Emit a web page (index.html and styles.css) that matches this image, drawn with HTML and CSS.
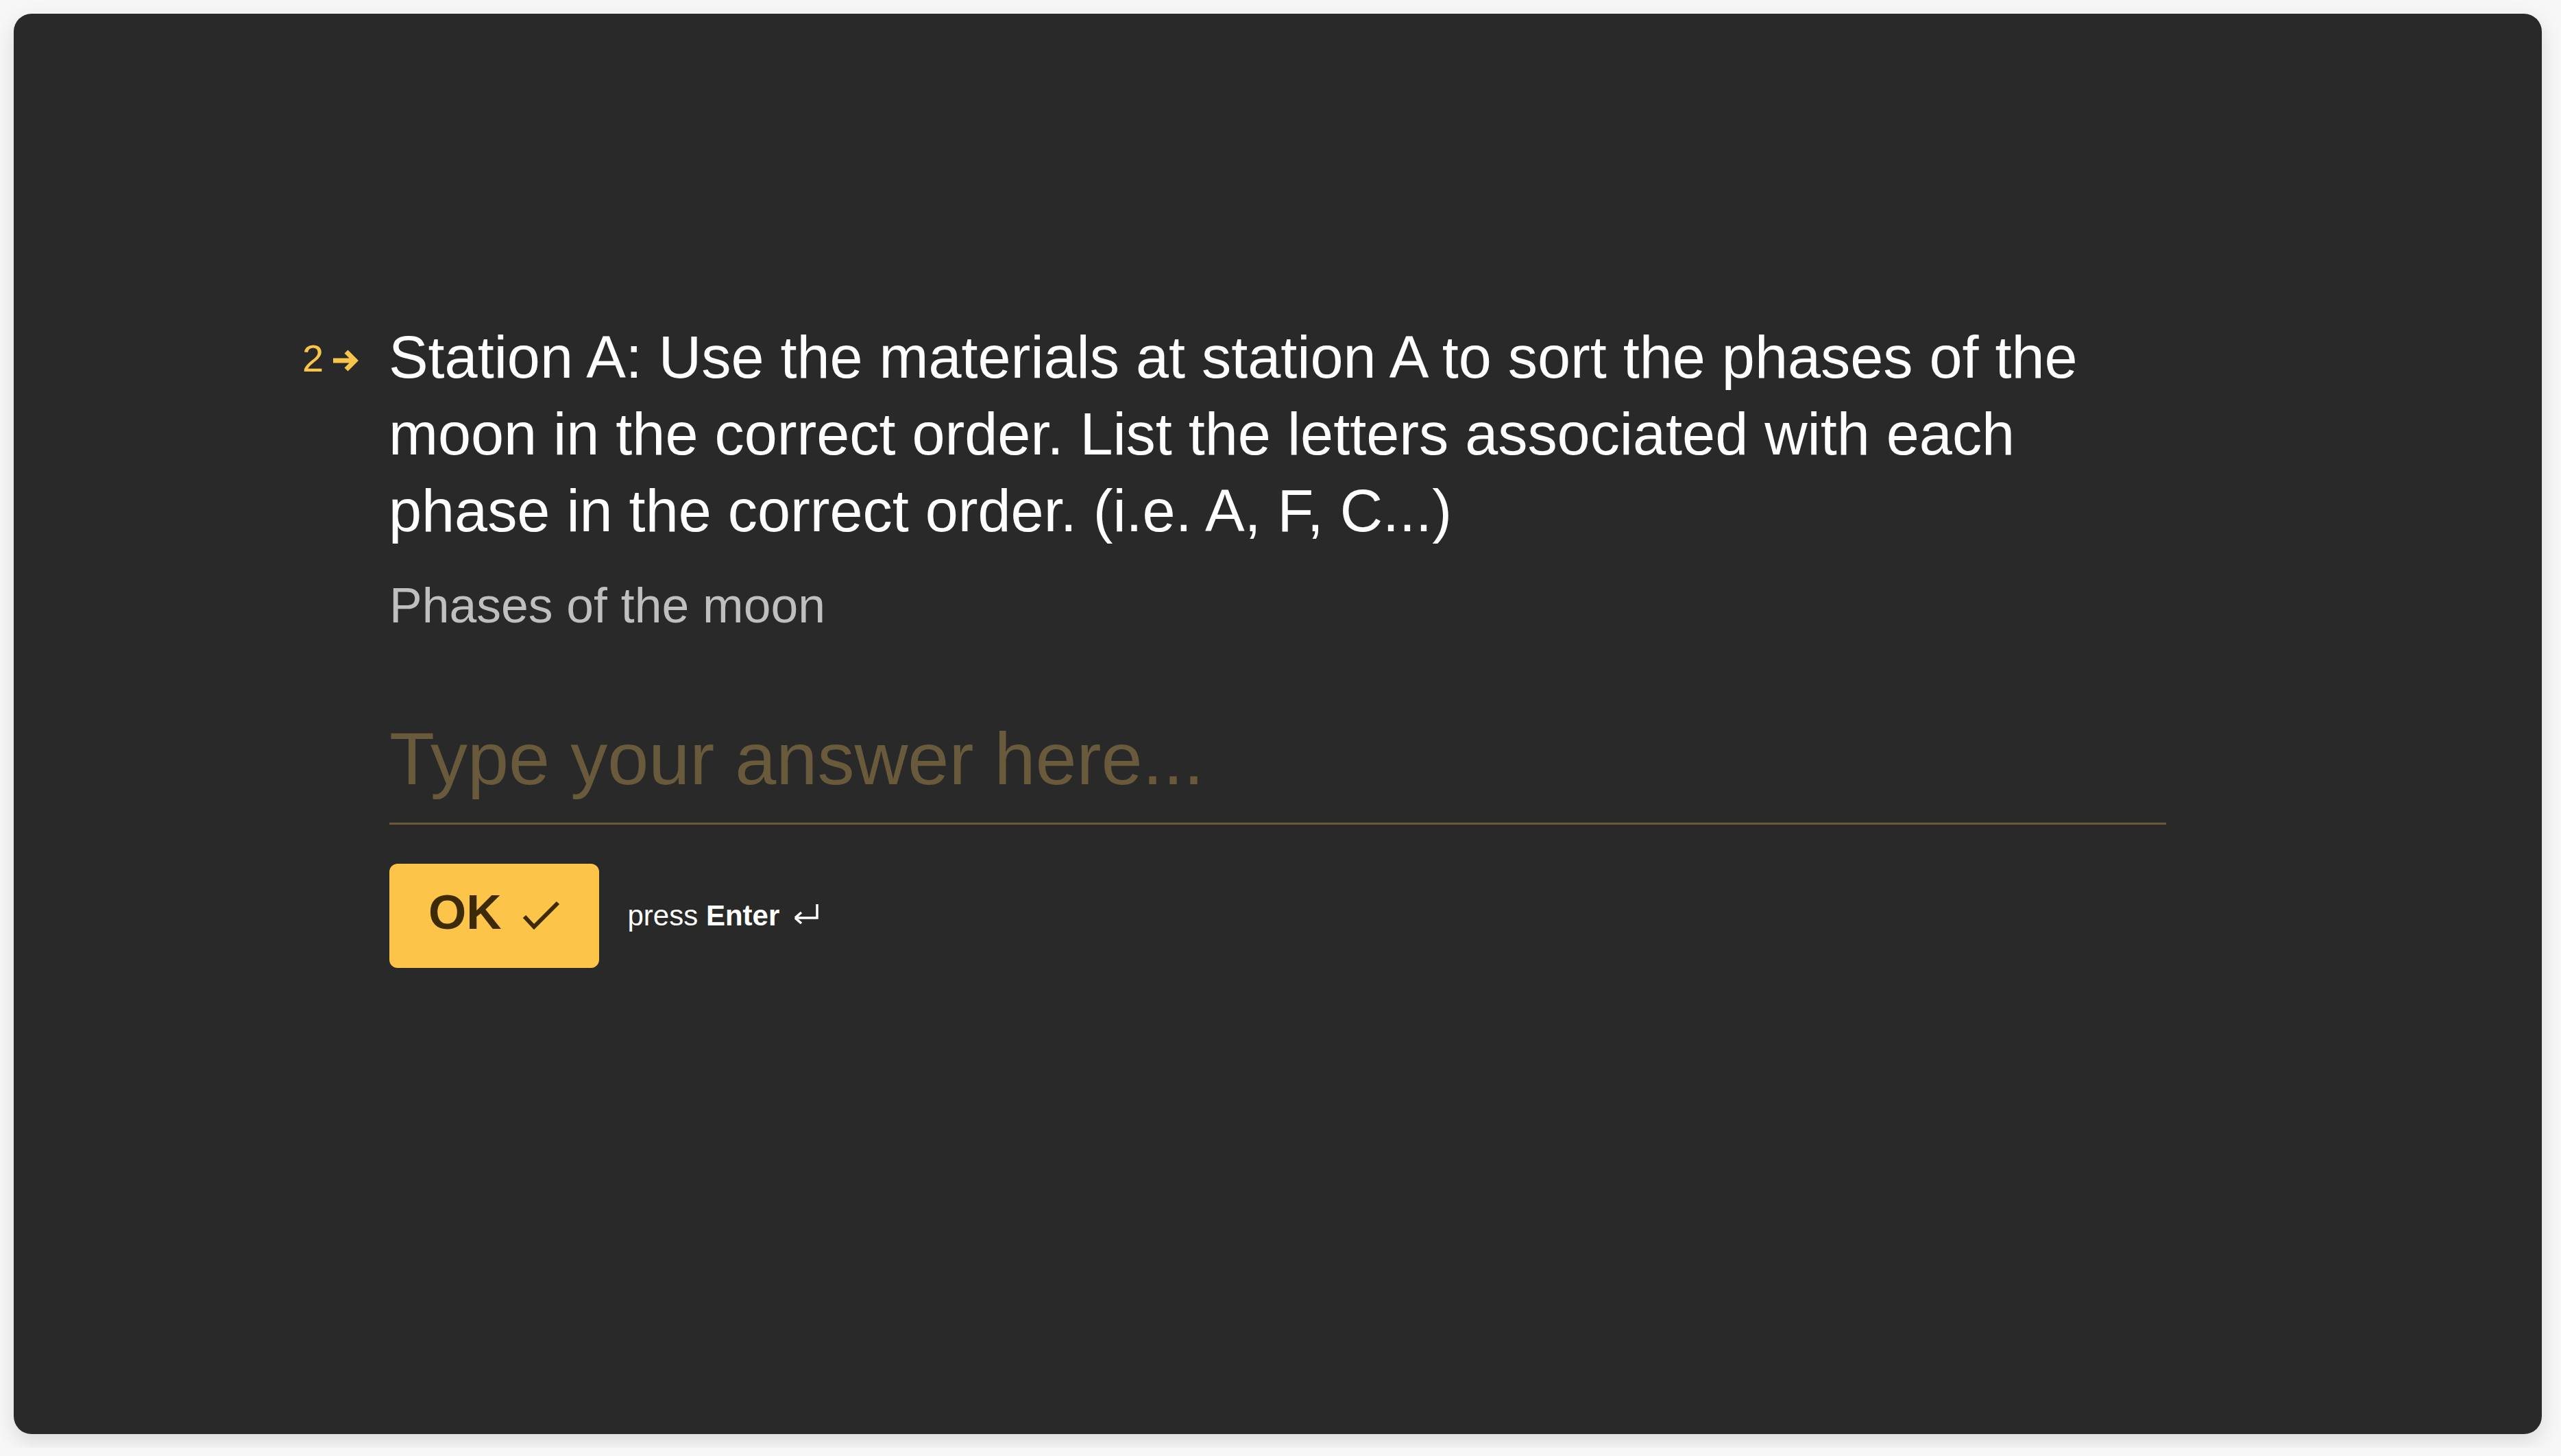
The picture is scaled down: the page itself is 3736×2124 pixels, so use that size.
FILE: index.html
```html
<!DOCTYPE html>
<html lang="en">
<head>
    <meta charset="UTF-8">
    <meta name="viewport" content="width=device-width, initial-scale=1.0">
    <title>Station A</title>
    <link rel="stylesheet" href="styles.css">
</head>
<body>

<div class="card">
    <div class="question">
        <div class="q-number">
            <span>2</span>
            <svg class="q-arrow" width="40" height="34" viewBox="0 0 40 34">
                <path d="M1 17H33M20 4L33 17L20 30" fill="none" stroke="#f8c44a" stroke-width="7"/>
            </svg>
        </div>
        <h1 class="q-title">Station A: Use the materials at station A to sort the phases of the moon in the correct order. List the letters associated with each phase in the correct order. (i.e. A, F, C...)</h1>
    </div>

    <div class="content">
        <p class="q-desc">Phases of the moon</p>

        <input type="text" class="answer" placeholder="Type your answer here...">

        <div class="actions">
            <button class="ok-btn">
                <span>OK</span>
                <svg width="56" height="46" viewBox="0 0 56 46">
                    <path d="M3 24L17 39L52 4" fill="none" stroke="#3d2a06" stroke-width="6"/>
                </svg>
            </button>
            <span class="hint">press <b>Enter</b></span>
            <svg class="enter-icon" width="36" height="30" viewBox="0 0 36 30">
                <path d="M33 1V21H4" fill="none" stroke="#fff" stroke-width="3.5"/>
                <path d="M1 21L10 13M1 21L10 29" fill="none" stroke="#fff" stroke-width="3.5"/>
            </svg>
        </div>
    </div>
</div>

</body>
</html>
```

FILE: styles.css
```css
body {
    margin: 0;
    padding: 20px;
    background: #f7f7f7;
    font-family: "Liberation Sans", Arial, sans-serif;
}
.card {
    width: 3688px;
    height: 2072px;
    box-sizing: border-box;
    background: #292929;
    border-radius: 26px;
    box-shadow: 0 10px 30px rgba(0,0,0,0.12);
    padding: 445px 548px 0;
}
.question {
    display: flex;
    margin-left: -127px;
}
.q-number {
    display: flex;
    align-items: center;
    height: 112px;
    width: 126px;
    flex-shrink: 0;
    color: #f8c44a;
    font-size: 56px;
    line-height: 112px;
}
.q-number span {
    padding-top: 4px;
}
.q-arrow {
    margin-left: 13px;
    margin-top: 10px;
}
.q-title {
    margin: 0;
    font-weight: normal;
    font-size: 86.4px;
    line-height: 112px;
    color: #fff;
}
.q-desc {
    margin: 32px 0 0;
    font-size: 71.5px;
    line-height: 100px;
    color: #bfbfbf;
}
.answer {
    display: block;
    width: 100%;
    box-sizing: content-box;
    height: 140px;
    margin-top: 104px;
    padding: 0 0 23px;
    border: none;
    border-bottom: 3px solid #6a5a38;
    background: transparent;
    font-family: "Liberation Sans", Arial, sans-serif;
    font-size: 108px;
    line-height: 140px;
    color: #fff;
    outline: none;
}
.answer::placeholder {
    color: #685a3a;
}
.actions {
    display: flex;
    align-items: center;
    margin-top: 57px;
}
.ok-btn {
    display: flex;
    align-items: center;
    gap: 30px;
    height: 152px;
    padding: 0 56px 10px 57px;
    border: none;
    border-radius: 12px;
    background: #fcc54a;
    color: #3d2a06;
    font-family: "Liberation Sans", Arial, sans-serif;
    font-weight: bold;
    font-size: 71px;
    line-height: 72px;
    cursor: pointer;
}
.ok-btn svg {
    margin-top: 10px;
}
.hint {
    margin-left: 42px;
    font-size: 42px;
    color: #fff;
}
.enter-icon {
    margin-left: 22px;
    margin-top: -6px;
}
```
